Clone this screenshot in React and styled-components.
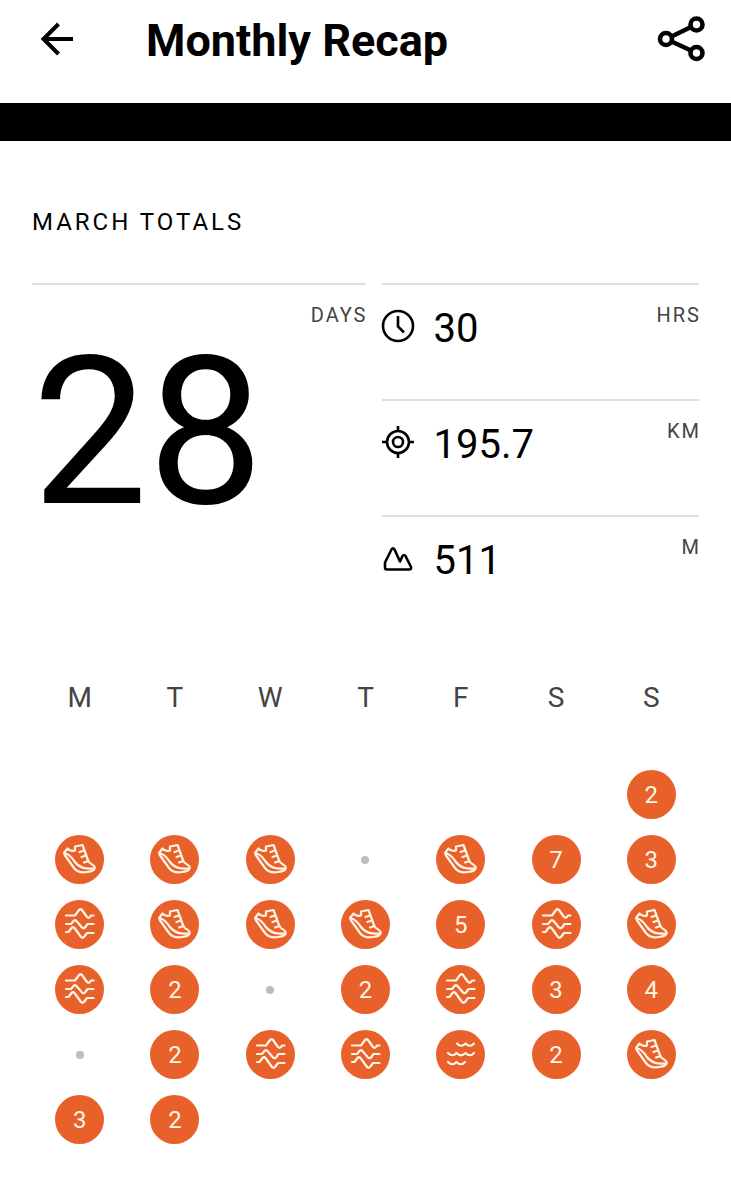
import React from "react";
import styled, { createGlobalStyle } from "styled-components";

const GlobalStyle = createGlobalStyle`
  * { box-sizing: border-box; }
  body { margin: 0; background: #fff; color: #000; font-family: Roboto, "Liberation Sans", sans-serif; }
`;

const Header = styled.header`
  display: flex;
  align-items: center;
  height: 103px;
  padding: 0 24px 24px 38px;
`;
const IconButton = styled.button`
  display: flex;
  padding: 0;
  border: 0;
  background: none;
  color: inherit;
  cursor: pointer;
`;
const Title = styled.h1`
  flex: 1;
  margin: 2px 0 0 70px;
  font-size: 45px;
  line-height: 56px;
  font-weight: 700;
`;
const Band = styled.div`
  height: 38px;
  background: #000;
`;
const Main = styled.main`
  padding: 65px 32px 48px;
`;
const SectionTitle = styled.h2`
  margin: 0;
  font-size: 24px;
  line-height: 32px;
  font-weight: 400;
  letter-spacing: 3px;
`;
const Totals = styled.section`
  display: grid;
  grid-template-columns: 1fr 1fr;
  margin-top: 45px;
`;
const DaysPanel = styled.div`
  display: flex;
  flex-direction: column;
  border-top: 2px solid #dfdfdf;
  padding-top: 16px;
`;
const Unit = styled.span`
  margin: 0 -2px 0 auto;
  color: #444;
  font-size: 20px;
  line-height: 28px;
  letter-spacing: 2px;
`;
const DaysValue = styled.span`
  font-size: 206px;
  line-height: 208px;
`;
const StatList = styled.div`
  padding-left: 16px;
`;
const StatRow = styled.div`
  display: flex;
  align-items: flex-start;
  height: 116px;
  padding-top: 16px;
  border-top: 2px solid #dfdfdf;
`;
const StatIcon = styled.svg`
  margin-top: 8px;
`;
const StatValue = styled.span`
  margin-left: 18px;
  font-size: 40px;
  line-height: 56px;
`;
const Calendar = styled.table`
  width: 100%;
  margin-top: 33px;
  border-collapse: collapse;
  table-layout: fixed;
`;
const Weekday = styled.th`
  height: 98px;
  padding: 0 0 30px;
  color: #444;
  font-size: 28px;
  line-height: 32px;
  font-weight: 400;
`;
const DayCell = styled.td`
  height: 65px;
  padding: 0;
`;
const Badge = styled.span`
  display: flex;
  align-items: center;
  justify-content: center;
  width: 49px;
  height: 49px;
  margin: 0 auto;
  border-radius: 50%;
  background: #e8602a;
  color: #fff5e6;
  font-size: 24px;
  line-height: 32px;
`;
const RestDot = styled.span`
  display: block;
  width: 8px;
  height: 8px;
  margin: 0 auto;
  border-radius: 50%;
  background: #bdbdbd;
`;

const stroke = { fill: "none", stroke: "currentColor" };

const BackIcon = () => (
  <svg width="38" height="38" viewBox="0 0 38 38" {...stroke} strokeWidth="4" aria-hidden="true">
    <path d="M35 18H5M20.500 3 5.500 18l15 15" />
  </svg>
);
const ShareIcon = () => (
  <svg width="50" height="50" viewBox="0 0 50 50" {...stroke} strokeWidth="4.6" aria-hidden="true">
    <circle cx="9" cy="24" r="6" />
    <circle cx="39.500" cy="9.500" r="6" />
    <circle cx="39.500" cy="38" r="6" />
    <path d="M14.500 21.500 34 12M14.500 26.500 34 35.500" />
  </svg>
);

const ClockArt = () => (
  <>
    <circle cx="16" cy="17" r="15" />
    <path d="M16 7v10.500l6 6" />
  </>
);
const TargetArt = () => (
  <>
    <circle cx="16" cy="17" r="11" />
    <circle cx="16" cy="17" r="5" />
    <path d="M16 1v5M16 28v5M0 17h5M27 17h5" />
  </>
);
const MountainArt = () => (
  <path
    strokeLinejoin="round"
    d="M3 21.500 9.500 8.500q1.500-2.500 3 0l5.500 12 2.500-5.500q1.500-2 3 0L29 26q.500 2.500-2 2.500H5q-2 0-2-2Z"
  />
);

const art = {
  shoe: (
    <>
      <path d="M12.500 13.500L9 18Q9.500 20 11.500 22.500L19 33C22.500 37.500 27 38 32 37C37.500 36.500 40.500 34.500 39.500 32C39 29.500 35.500 29.500 33.500 26.500L27.500 10L20 11.500V15.500C17 16.500 14.500 16 12.500 13.500Z" />
      <path strokeLinecap="round" d="M10.500 18.500C15.500 20 17 23 19.500 26.500C24.500 33 29.500 34 38.500 33.500M29 15.500l-4.500 1.500M31 20.500l-4.500 1.500M33.500 26l-4.500 1.500" />
    </>
  ),
  trail: (
    <path strokeLinecap="round" d="M11 15.500h9l4-5.500q1.500-1.500 3 0l5 7q1.500 1.500 3 0l1-1.500h2.500M11 24h5l2.500-3q1.500-1.500 3 0l5.500 6.500q1.500 1.500 3 0l2.500-3.500h6M11 32h2.500l3-4q1.500-1.500 3 0l6.500 9q1.500 1.500 3 0l3-4h6.500" />
  ),
  swim: (
    <path strokeLinecap="round" d="M21 13.500q4 4.500 8.500 0 4.500 4.500 8.500 0M12 23q4.500 4.500 8.500 0 4.500 4.500 9 0 4.500 4.500 8.500 0M12 32q4.500 4.500 8.500 0 4.500 4.500 8.500 0" />
  ),
};
const labels = { shoe: "Run", trail: "Trail", swim: "Swim" };

const stats = [
  { value: "30", unit: "HRS", Art: ClockArt },
  { value: "195.7", unit: "KM", Art: TargetArt },
  { value: "511", unit: "M", Art: MountainArt },
];
const weekdays = ["M", "T", "W", "T", "F", "S", "S"];
const weeks = [
  [null, null, null, null, null, null, 2],
  ["shoe", "shoe", "shoe", "rest", "shoe", 7, 3],
  ["trail", "shoe", "shoe", "shoe", 5, "trail", "shoe"],
  ["trail", 2, "rest", 2, "trail", 3, 4],
  ["rest", 2, "trail", "trail", "swim", 2, "shoe"],
  [3, 2, null, null, null, null, null],
];

function Day({ entry }) {
  if (entry === null) return null;
  if (entry === "rest") return <RestDot />;
  if (typeof entry === "number") return <Badge>{entry}</Badge>;
  return (
    <Badge>
      <svg width="49" height="49" viewBox="0 0 49 49" {...stroke} strokeWidth="2.2" strokeLinejoin="round" role="img" aria-label={labels[entry]}>
        {art[entry]}
      </svg>
    </Badge>
  );
}

export default function App() {
  return (
    <>
      <GlobalStyle />
      <Header>
        <IconButton aria-label="Back"><BackIcon /></IconButton>
        <Title>Monthly Recap</Title>
        <IconButton aria-label="Share"><ShareIcon /></IconButton>
      </Header>
      <Band />
      <Main>
        <SectionTitle>MARCH TOTALS</SectionTitle>
        <Totals>
          <DaysPanel>
            <Unit>DAYS</Unit>
            <DaysValue>28</DaysValue>
          </DaysPanel>
          <StatList>
            {stats.map(({ value, unit, Art }) => (
              <StatRow key={unit}>
                <StatIcon width="34" height="34" viewBox="0 0 34 34" {...stroke} strokeWidth="2.6" overflow="visible" aria-hidden="true">
                  <Art />
                </StatIcon>
                <StatValue>{value}</StatValue>
                <Unit>{unit}</Unit>
              </StatRow>
            ))}
          </StatList>
        </Totals>
        <Calendar>
          <thead>
            <tr>{weekdays.map((d, i) => <Weekday key={i} scope="col">{d}</Weekday>)}</tr>
          </thead>
          <tbody>
            {weeks.map((week, w) => (
              <tr key={w}>{week.map((entry, i) => <DayCell key={i}><Day entry={entry} /></DayCell>)}</tr>
            ))}
          </tbody>
        </Calendar>
      </Main>
    </>
  );
}
